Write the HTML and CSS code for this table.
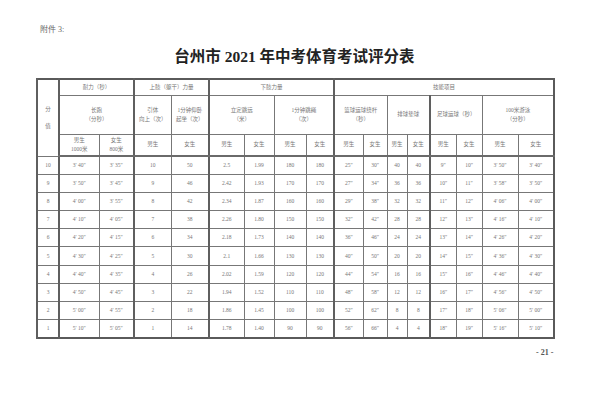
FILE: index.html
```html
<!DOCTYPE html>
<html lang="zh">
<head>
<meta charset="utf-8">
<link rel="stylesheet" href="styles.css">
</head>
<body>
<div class="page">
  <div class="annex">附件 3:</div>
  <h1 class="title">台州市 2021 年中考体育考试评分表</h1>
  <table class="score">
    <colgroup>
      <col style="width:22px"><col style="width:40px"><col style="width:35px"><col style="width:37px"><col style="width:38px"><col style="width:35px"><col style="width:30px"><col style="width:32px"><col style="width:28px"><col style="width:29px"><col style="width:24px"><col style="width:20px"><col style="width:23px"><col style="width:26px"><col style="width:26px"><col style="width:36px"><col style="width:36px">
    </colgroup>
    <thead>
      <tr class="h1">
        <th rowspan="3" class="g">分<br><br>值</th>
        <th colspan="2" class="g">耐力（秒）</th>
        <th colspan="2" class="g">上肢（躯干）力量</th>
        <th colspan="4" class="g">下肢力量</th>
        <th colspan="8" class="g">技能项目</th>
      </tr>
      <tr class="h2">
        <th colspan="2" class="g">长跑<br>（分秒）</th>
        <th class="g">引体<br>向上（次）</th>
        <th>1分钟仰卧<br>起坐（次）</th>
        <th colspan="2" class="g">立定跳远<br>（米）</th>
        <th colspan="2">1分钟跳绳<br>（次）</th>
        <th colspan="2" class="g">篮球运球绕杆<br>（秒）</th>
        <th colspan="2">排球垫球</th>
        <th colspan="2" class="g">足球运球（秒）</th>
        <th colspan="2">100米游泳<br>（分秒）</th>
      </tr>
      <tr class="h3">
        <th class="g">男生<br>1000米</th><th>女生<br>800米</th>
        <th class="g">男生</th><th>女生</th>
        <th class="g">男生</th><th>女生</th><th>男生</th><th>女生</th>
        <th class="g">男生</th><th>女生</th><th>男生</th><th>女生</th>
        <th class="g">男生</th><th>女生</th><th>男生</th><th>女生</th>
      </tr>
    </thead>
    <tbody>
      <tr><td class="g">10</td><td class="g">3′ 40″</td><td>3′ 35″</td><td class="g">10</td><td>50</td><td class="g">2.5</td><td>1.99</td><td>180</td><td>180</td><td class="g">25″</td><td>30″</td><td>40</td><td>40</td><td class="g">9″</td><td>10″</td><td>3′ 50″</td><td>3′ 40″</td></tr>
      <tr><td class="g">9</td><td class="g">3′ 50″</td><td>3′ 45″</td><td class="g">9</td><td>46</td><td class="g">2.42</td><td>1.93</td><td>170</td><td>170</td><td class="g">27″</td><td>34″</td><td>36</td><td>36</td><td class="g">10″</td><td>11″</td><td>3′ 58″</td><td>3′ 50″</td></tr>
      <tr><td class="g">8</td><td class="g">4′ 00″</td><td>3′ 55″</td><td class="g">8</td><td>42</td><td class="g">2.34</td><td>1.87</td><td>160</td><td>160</td><td class="g">29″</td><td>38″</td><td>32</td><td>32</td><td class="g">11″</td><td>12″</td><td>4′ 06″</td><td>4′ 00″</td></tr>
      <tr><td class="g">7</td><td class="g">4′ 10″</td><td>4′ 05″</td><td class="g">7</td><td>38</td><td class="g">2.26</td><td>1.80</td><td>150</td><td>150</td><td class="g">32″</td><td>42″</td><td>28</td><td>28</td><td class="g">12″</td><td>13″</td><td>4′ 16″</td><td>4′ 10″</td></tr>
      <tr><td class="g">6</td><td class="g">4′ 20″</td><td>4′ 15″</td><td class="g">6</td><td>34</td><td class="g">2.18</td><td>1.73</td><td>140</td><td>140</td><td class="g">36″</td><td>46″</td><td>24</td><td>24</td><td class="g">13″</td><td>14″</td><td>4′ 26″</td><td>4′ 20″</td></tr>
      <tr><td class="g">5</td><td class="g">4′ 30″</td><td>4′ 25″</td><td class="g">5</td><td>30</td><td class="g">2.1</td><td>1.66</td><td>130</td><td>130</td><td class="g">40″</td><td>50″</td><td>20</td><td>20</td><td class="g">14″</td><td>15″</td><td>4′ 36″</td><td>4′ 30″</td></tr>
      <tr><td class="g">4</td><td class="g">4′ 40″</td><td>4′ 35″</td><td class="g">4</td><td>26</td><td class="g">2.02</td><td>1.59</td><td>120</td><td>120</td><td class="g">44″</td><td>54″</td><td>16</td><td>16</td><td class="g">15″</td><td>16″</td><td>4′ 46″</td><td>4′ 40″</td></tr>
      <tr><td class="g">3</td><td class="g">4′ 50″</td><td>4′ 45″</td><td class="g">3</td><td>22</td><td class="g">1.94</td><td>1.52</td><td>110</td><td>110</td><td class="g">48″</td><td>58″</td><td>12</td><td>12</td><td class="g">16″</td><td>17″</td><td>4′ 56″</td><td>4′ 50″</td></tr>
      <tr><td class="g">2</td><td class="g">5′ 00″</td><td>4′ 55″</td><td class="g">2</td><td>18</td><td class="g">1.86</td><td>1.45</td><td>100</td><td>100</td><td class="g">52″</td><td>62″</td><td>8</td><td>8</td><td class="g">17″</td><td>18″</td><td>5′ 06″</td><td>5′ 00″</td></tr>
      <tr><td class="g">1</td><td class="g">5′ 10″</td><td>5′ 05″</td><td class="g">1</td><td>14</td><td class="g">1.78</td><td>1.40</td><td>90</td><td>90</td><td class="g">56″</td><td>66″</td><td>4</td><td>4</td><td class="g">18″</td><td>19″</td><td>5′ 16″</td><td>5′ 10″</td></tr>
    </tbody>
  </table>
  <div class="pageno">- 21 -</div>
</div>
</body>
</html>
```
FILE: styles.css
```css
html, body {
  margin: 0;
  padding: 0;
  background: #fff;
}
body {
  font-family: "Liberation Serif", "Noto Sans CJK SC", serif;
  color: #333;
}
.page {
  width: 600px;
  height: 400px;
  padding: 24px 0 0 36px;
  box-sizing: border-box;
  position: relative;
}
.annex {
  font-size: 8px;
  line-height: 12px;
  color: #666;
  margin-left: 4px;
}
.title {
  margin: 9px 0 0 0;
  width: 517px;
  text-align: center;
  font-size: 15.5px;
  line-height: 24px;
  font-weight: bold;
  color: #222;
  height: 33px;
}
.score {
  border-collapse: collapse;
  table-layout: fixed;
  width: 517px;
  border: 2px solid #5a5a5a;
  color: #777;
}
.score th, .score td {
  border: 1px solid #777;
  padding: 0;
  text-align: center;
  vertical-align: middle;
  font-size: 5.5px;
  line-height: 1.6;
  font-weight: normal;
  overflow: hidden;
  white-space: nowrap;
}
.score .g {
  border-left: 2px solid #5f5f5f;
}
.h1 { height: 16px; }
.h2 { height: 39px; }
.h3 { height: 22px; }
.h3 th { border-bottom: 2px solid #6a6a6a; }
.score tbody tr { height: 18.2px; }
.pageno {
  position: absolute;
  left: 536px;
  top: 348px;
  font-size: 8px;
  font-weight: bold;
  color: #555;
}
```
